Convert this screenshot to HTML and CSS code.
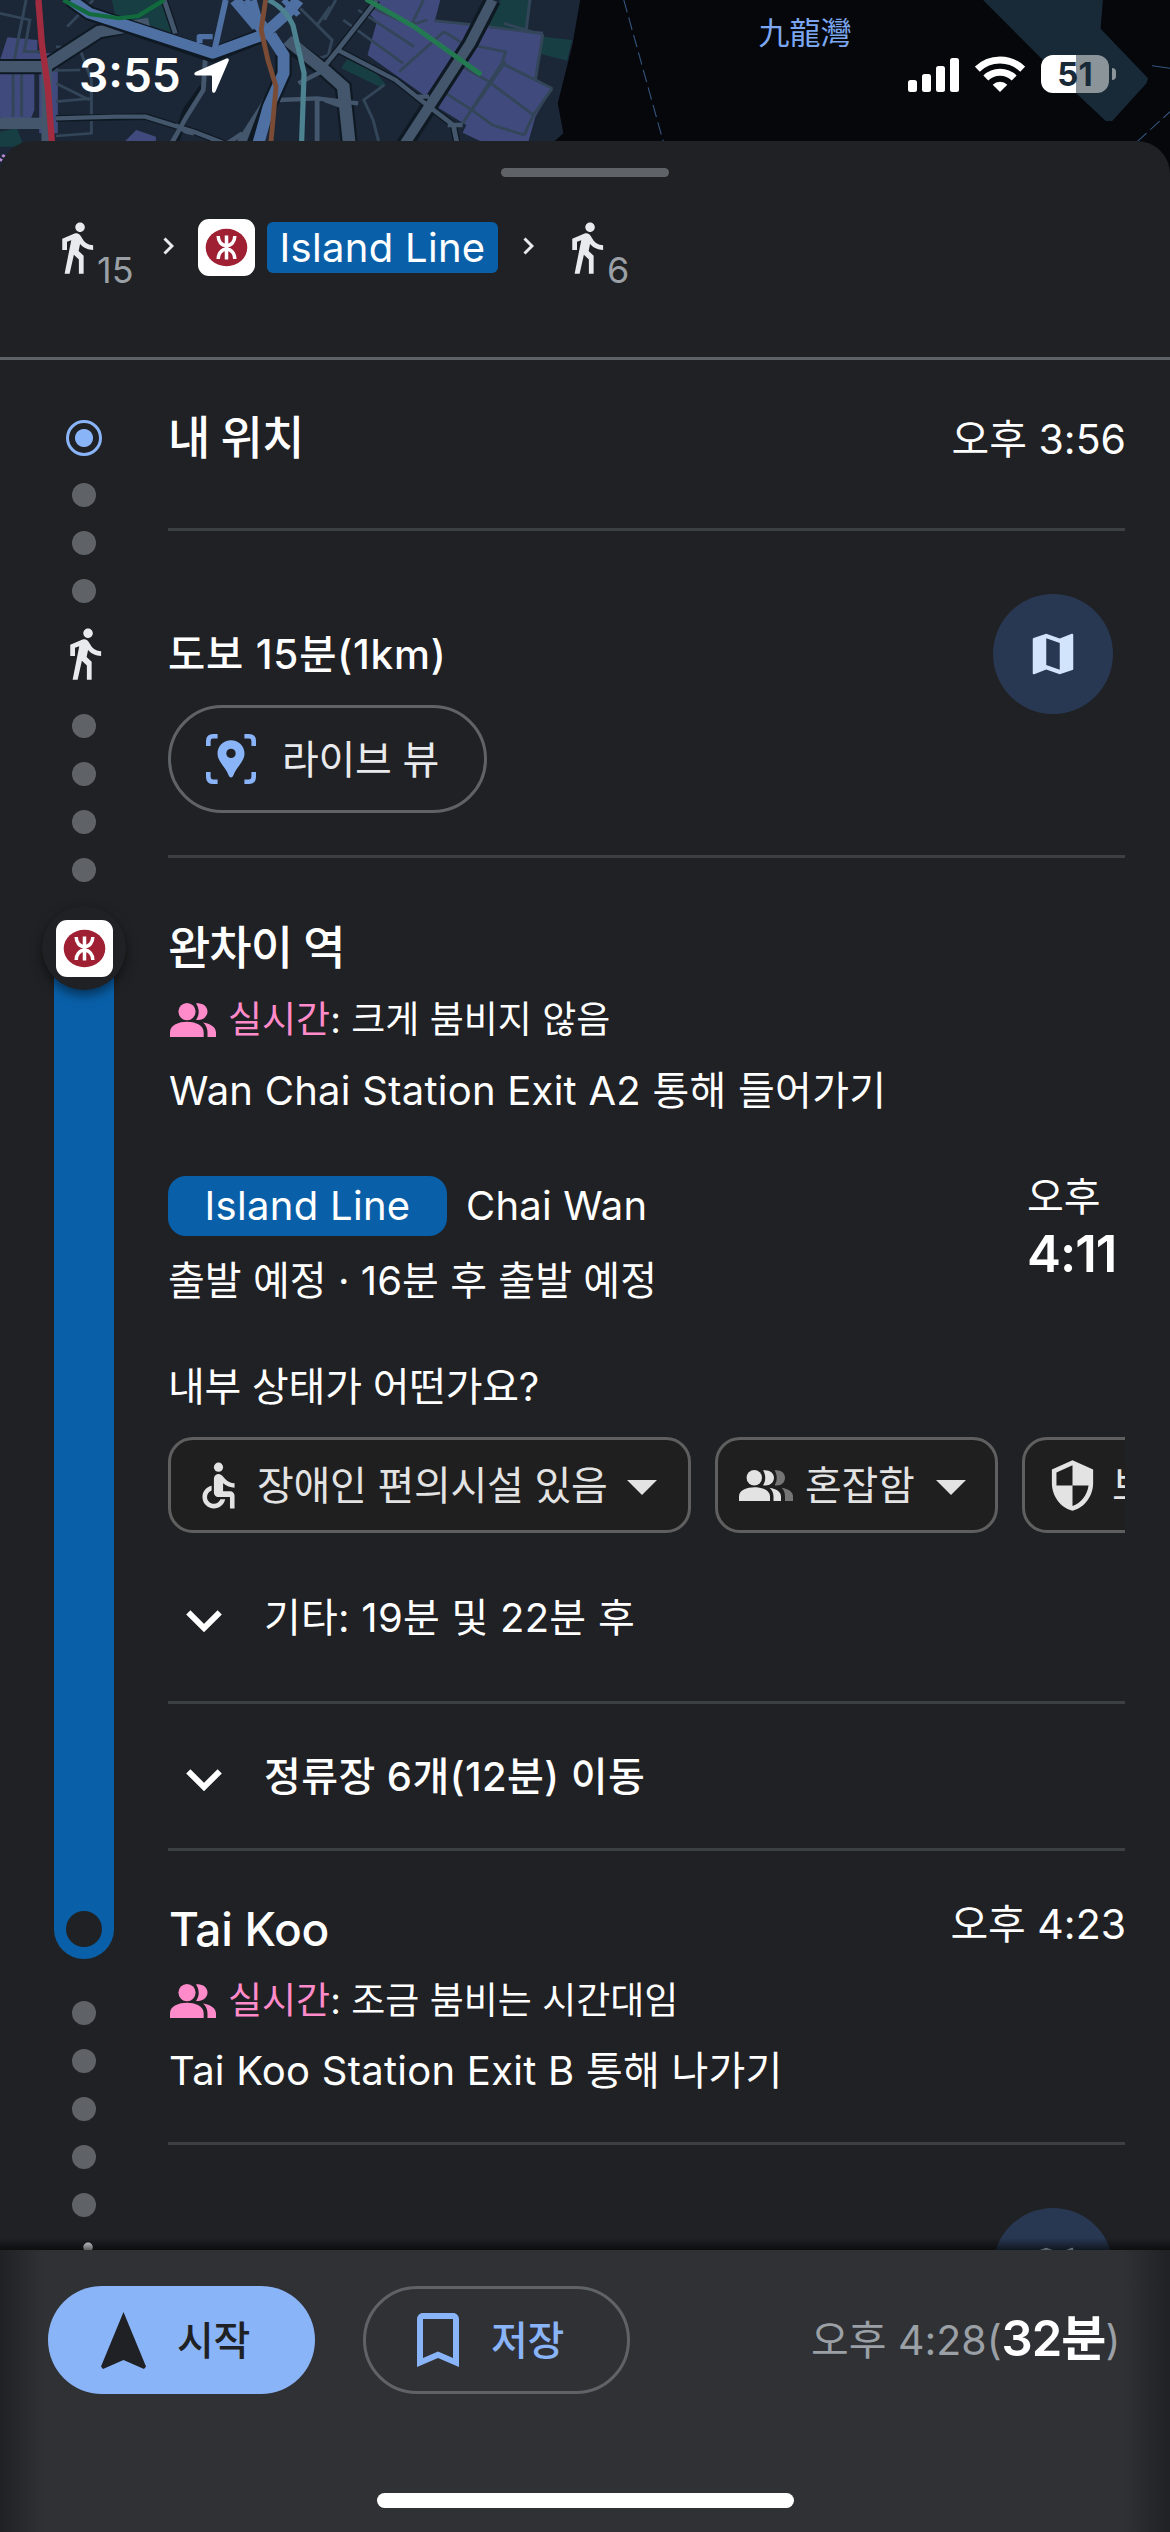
FILE: index.html
```html
<!DOCTYPE html>
<html lang="ko">
<head>
<meta charset="utf-8">
<title>경로 안내</title>
<link rel="stylesheet" href="styles.css">
</head>
<body>
<svg class="defs" width="0" height="0">
  <symbol id="walk" viewBox="0 0 24 24"><path d="M13.5 5.5c1.1 0 2-.9 2-2s-.9-2-2-2-2 .9-2 2 .9 2 2 2zM9.8 8.9L7 23h2.1l1.8-8 2.1 2v6h2v-7.5l-2.1-2 .6-3C14.8 12 16.8 13 19 13v-2c-1.9 0-3.5-1-4.3-2.4l-1-1.6c-.4-.6-1-1-1.7-1-.3 0-.5.1-.8.1L6 8.3V13h2V9.6l1.8-.7z"/></symbol>
  <symbol id="mtr" viewBox="-28.5 -28.5 57 57"><rect x="-28.5" y="-28.5" width="57" height="57" rx="11" fill="#fff"/><ellipse rx="20.8" ry="18.8" fill="#9f2033"/><g fill="none" stroke="#fff" stroke-width="3.5"><path d="M0-12V12"/><path d="M-8.3-11.5C-8.3-6-5-1.8 0-1.8S8.300-6 8.300-11.500"/><path d="M-8.3 11.5C-8.3 6-5 1.8 0 1.8S8.3 6 8.3 11.5"/></g></symbol>
  <symbol id="map" viewBox="0 0 24 24"><path d="M20.5 3l-.16.03L15 5.1 9 3 3.36 4.9c-.21.07-.36.25-.36.48V20.5c0 .28.22.5.5.5l.16-.03L9 18.9l6 2.1 5.64-1.9c.21-.07.36-.25.36-.48V3.5c0-.28-.22-.5-.5-.5zM15 19l-6-2.11V5l6 2.11V19z"/></symbol>
  <symbol id="people" viewBox="0 0 46 34"><ellipse cx="17" cy="8.6" rx="8.6" ry="8.6"/><path d="M0 34V29.5C0 22 9 18.8 17 18.8S33.7 22 33.7 29.5V34zM26 .4C29.6 5.5 29.6 12 26 16.8C32 18 37.5 14 37.5 8.6S32-.6 26 .4zM33 19.4C40.5 20.6 46 24 46 29.5V34H37.5V29.5C37.5 25.5 36 22 33 19.4z"/></symbol>
</svg>

<div class="map">
  <svg class="map-art" viewBox="0 0 1170 176">
    <rect width="1170" height="176" fill="#05070b"/>
    <g transform="scale(.3731 .3333)">
      <path fill="#1b2737" d="M0 0H1555L1535 130 1495 310 1510 400 1480 430V530H0z"/>
      <g fill="#414a7c"><path d="M20 112L100 120V160H155V400H105V215H92V330L75 378H35L0 352V215L0 180z"/><path d="M1010 0H1180L1165 65 1280 75 1315 85 1455 95 1435 235 1480 265 1435 350 1415 430H1300L1240 398 1250 375 1170 320 1195 275 1140 288 985 165 1010 65 985 35z"/><path d="M365 390L418 410V430H330z"/></g>
      <g fill="#173f43"><path d="M300 0H440L465 100 360 60 310 50z"/><path d="M1340 0H1425L1410 95 1310 80z"/><path d="M1455 110L1533 120 1520 182 1450 162z"/><path d="M930 178L1005 215 1035 255 1020 262 915 205z"/><path d="M0 395L45 384 58 420V440H0z"/></g>
      <g fill="none" stroke="#334558" stroke-width="8"><path d="M0 40L80 60 65 155H110M70 0L50 110 35 200V350M58 215V350M0 215L215 210M180 80L250 0M150 140L215 150 245 240V400L150 408M150 305L245 295M150 250L240 300M805 25L850 75 890 120 880 165 820 190M850 75L885 20M900 0L870 60M920 60L1080 190M960 30L1110 140M990 20L1100 75 1145 60M1350 70L1440 100M1135 0L1100 80M1165 62L1310 80 1455 102M1190 95L1240 130 1355 155 1345 190 1480 265M1190 95L1070 215M1240 200L1310 245 1430 345M1195 280L1265 330 1320 375 1405 405M1355 185L1265 330M1455 102L1435 240M1345 190L1240 370M1030 255L975 300 1000 360 1015 425M1420 0L1410 95M1480 265L1430 345 1405 405"/></g>
      <g fill="none" stroke="#0f1923" stroke-width="46"><path d="M0 200H120L265 95 330 80"/><path d="M1320 0L1260 130 1150 320 1080 440"/><path d="M770 130L870 210 920 260 937 440"/></g>
      <g fill="none" stroke="#0f1923" stroke-width="20"><path d="M1010 0L905 150 865 205M905 150L1060 240 1150 320 1215 375 1225 430M150 355L390 350 520 395 600 430M470 425L500 330 545 260M440 0L470 100"/></g>
      <g fill="none" stroke="#43566b" stroke-width="34"><path d="M0 200H120L265 95 400 70M0 370H120M770 120L870 210 920 260 937 440M650 430L730 290"/><path d="M1320 0L1260 130 1150 320 1080 440M125 180V430" stroke-width="28"/></g>
      <g fill="none" stroke="#43566b" stroke-width="13"><path d="M1010 0L905 150 865 205M905 150L1060 240 1150 320 1215 375 1225 430M1150 290H1120M1200 375H1240M150 355L310 350 390 350 520 395 600 430M460 430L500 350 545 270 550 180M470 375L500 395 520 400M750 300L850 295 960 310M850 300V430M870 300L920 320M440 0L470 100M800 250L870 210M610 430L650 400"/></g>
      <path fill="none" stroke="#0f1923" stroke-width="44" d="M190 0L240 40 570 165 705 105M760 165V220L720 320 680 440"/>
      <g fill="none" stroke="#4e70a2" stroke-linejoin="round"><path stroke-width="32" d="M190 0L240 40 570 160 705 105 770 40 800 0M630 0L690 80M725 105L760 165V220L720 320 690 440"/><path stroke-width="16" d="M605 0L575 150M570 110H535V130M630 0L705 105M660 0L720 90M760 0L800 45M680 0L700 80"/></g>
      <path fill="none" stroke="#116b3c" stroke-width="12" d="M170 0L240 42 320 55 370 48 440 0"/>
      <path fill="none" stroke="#237a52" stroke-width="14" stroke-linecap="round" d="M985 0L1110 80 1285 220"/>
      <path fill="none" stroke="#a12c40" stroke-width="17" d="M103 0L112 130 128 260 140 440"/>
      <path fill="none" stroke="#7a4c35" stroke-width="13" d="M712 0L700 90 718 180 740 260 725 440"/>
      <path fill="none" stroke="#4d8290" stroke-width="14" d="M720 0Q765 25 785 75L815 220 808 440"/>
      <path fill="none" stroke="#b98ad8" stroke-width="8" stroke-dasharray="8 6" d="M0 483L14 460"/>
    </g>
    <g transform="translate(585 0) scale(.3731 .3333)">
      <path fill="#182a38" d="M1067 0H1388L1382 86 1509 235 1505 250 1413 363H1396L1312 275z"/>
      <g fill="none" stroke="#34557f" stroke-width="3"><path stroke-dasharray="38 16" d="M104 0L211 430"/><path stroke-dasharray="36 14" d="M1480 425L1568 335"/><path d="M1520 197L1568 205"/></g>
    </g>
  </svg>
  <div class="place"><span>카우룽만</span><strong>九龍灣</strong></div>
  <div class="status">
    <span class="clock">3:55</span>
    <svg class="loc" viewBox="0 0 35 35"><path d="M32.5.4Q35.2 0 34.8 2.6L21.5 33.5Q20.5 35.5 18.8 34.5 18 34 18 32V18.5Q18 17.5 17 17.5H3Q.8 17.5.3 16.2 0 14.8 2 13.7z"/></svg>
    <svg class="signal" viewBox="0 0 52 34"><rect y="22" width="9" height="12" rx="2.5"/><rect x="14" y="16" width="9" height="18" rx="2.5"/><rect x="28" y="8" width="9" height="26" rx="2.5"/><rect x="42" width="9" height="34" rx="2.5"/></svg>
    <svg class="wifi" viewBox="0 0 50 36"><g fill="none" stroke="#fff" stroke-width="7"><path d="M2.3 13.2A32.5 32.5 0 0 1 47.7 13.2"/><path d="M10.8 22A20.5 20.5 0 0 1 39.2 22"/></g><path fill="#fff" d="M25 36L17.7 28.8A10.5 10.5 0 0 1 32.3 28.8z"/></svg>
    <div class="battery"><span>51</span></div>
  </div>
</div>

<main class="sheet">
  <header class="summary">
    <div class="handle"></div>
    <div class="modes">
      <svg class="walk"><use href="#walk"/></svg><span class="mins">15</span>
      <svg class="sep first" viewBox="0 0 11 18"><path d="M1.5 1.5L9 9 1.5 16.5"/></svg>
      <svg class="mtr"><use href="#mtr"/></svg>
      <span class="tag">Island Line</span>
      <svg class="sep second" viewBox="0 0 11 18"><path d="M1.5 1.5L9 9 1.5 16.5"/></svg>
      <svg class="walk"><use href="#walk"/></svg><span class="mins">6</span>
    </div>
  </header>

  <div class="route">
    <div class="rail">
      <div class="origin"></div>
      <div class="dots"><i></i><i></i><i></i></div>
      <svg class="walk"><use href="#walk"/></svg>
      <div class="dots second"><i></i><i></i><i></i><i></i></div>
      <div class="ride"><div class="bullet"><svg class="mtr"><use href="#mtr"/></svg></div><div class="stop"></div></div>
      <div class="dots third"><i></i><i></i><i></i><i></i><i></i></div>
      <svg class="walk"><use href="#walk"/></svg>
    </div>

    <div class="steps">
      <section class="step start">
        <h2>내 위치</h2>
        <time>오후 3:56</time>
      </section>

      <section class="step foot">
        <div>
          <h3>도보 15분(1km)</h3>
          <button class="live"><svg viewBox="0 0 50 50"><g fill="none" stroke="#8ab4f8" stroke-width="4.6"><path d="M2.3 12V7Q2.3 2.3 7 2.3H11.6M38.4 2.3H43Q47.7 2.3 47.7 7V12M47.7 38V43Q47.7 47.7 43 47.7H38.4M11.6 47.7H7Q2.3 47.7 2.3 43V38"/></g><path fill="#8ab4f8" fill-rule="evenodd" d="M25 6.2C17.5 6.2 11.5 12 11.5 19.5 11.5 28 20 33 22.8 41.8Q23.5 43.6 25 43.6T27.2 41.8C30 33 38.5 28 38.5 19.5 38.5 12 32.5 6.2 25 6.2zM25 14.7a4.7 4.7 0 1 1 0 9.4 4.7 4.7 0 0 1 0-9.4z"/></svg><span>라이브 뷰</span></button>
        </div>
        <button class="fab"><svg><use href="#map"/></svg></button>
      </section>

      <section class="step board">
        <h2>완차이 역</h2>
        <p class="crowd"><svg><use href="#people"/></svg><span><b>실시간</b>: 크게 붐비지 않음</span></p>
        <p class="exit">Wan Chai Station Exit A2 통해 들어가기</p>
        <div class="depart">
          <div>
            <div class="line"><span class="pill">Island Line</span><span class="dest">Chai Wan</span></div>
            <p class="when">출발 예정 · 16분 후 출발 예정</p>
          </div>
          <div class="at"><span>오후</span><strong>4:11</strong></div>
        </div>
        <p class="ask">내부 상태가 어떤가요?</p>
        <div class="chips">
          <button class="chip c1"><svg class="acc" viewBox="0 0 24 24"><circle cx="12" cy="4" r="2"/><path d="M19 13v-2c-1.54.02-3.09-.75-4.07-1.83l-1.29-1.43c-.17-.19-.38-.34-.61-.45-.01 0-.01-.01-.02-.01H13c-.35-.2-.75-.3-1.19-.26C10.76 7.11 10 8.04 10 9.09V15c0 1.1.9 2 2 2h5v5h2v-5.5c0-1.1-.9-2-2-2h-3v-3.45c1.29 1.07 3.25 1.94 5 1.95zm-6.17 5c-.41 1.16-1.52 2-2.83 2-1.66 0-3-1.34-3-3 0-1.31.84-2.41 2-2.83V12.1c-2.28.46-4 2.48-4 4.9 0 2.76 2.24 5 5 5 2.42 0 4.44-1.72 4.9-4h-2.07z"/></svg><span>장애인 편의시설 있음</span><i></i></button>
          <button class="chip c2"><svg class="busy" viewBox="0 0 54 31"><circle cx="15.3" cy="7.7" r="7.7"/><path d="M0 31V26.5C0 20 8 17.2 15.5 17.2S31 20 31 26.5V31zM24 .3C27 5 27 11 24 15.2 30 16.5 35 12.8 35 7.7S30-.6 24 .3zM30.5 17.8C37.5 19 42 22 42 26.5V31H34.5V26.5C34.5 23 33 20 30.5 17.8z"/><path fill="#757575" d="M35.5.3C38.5 5 38.5 11 35.5 15.2 41.5 16.5 46 12.8 46 7.7S41.5-.6 35.5.3zM42.5 17.8C49.5 19 54 22 54 26.5V31H46V26.5C46 23 45 20 42.5 17.8z"/></svg><span>혼잡함</span><i></i></button>
          <button class="chip c3"><svg class="sec" viewBox="0 0 24 24"><path d="M12 1L3 5v6c0 5.55 3.84 10.74 9 12 5.16-1.26 9-6.45 9-12V5l-9-4zm0 10.99h7c-.53 4.12-3.28 7.79-7 8.94V12H5V6.3l7-3.11v8.8z"/></svg><span>보안</span></button>
        </div>
        <div class="more"><svg viewBox="0 0 36 22"><path d="M2.3 2.3L18 18 33.7 2.3"/></svg><span>기타: 19분 및 22분 후</span></div>
      </section>

      <section class="step stops">
        <div class="more strong"><svg viewBox="0 0 36 22"><path d="M2.3 2.3L18 18 33.7 2.3"/></svg><span>정류장 6개(12분) 이동</span></div>
      </section>

      <section class="step alight">
        <div>
          <h2 class="latin">Tai Koo</h2>
          <p class="crowd"><svg><use href="#people"/></svg><span><b>실시간</b>: 조금 붐비는 시간대임</span></p>
          <p class="exit">Tai Koo Station Exit B 통해 나가기</p>
        </div>
        <time>오후 4:23</time>
      </section>

      <section class="step last"><button class="fab"><svg><use href="#map"/></svg></button></section>
    </div>
  </div>
</main>

<footer class="bar">
  <div class="actions">
    <button class="go"><svg viewBox="0 0 45 57"><path d="M22.5 0L45 54.5 43 57 22.5 48 2 57 0 54.5z"/></svg><span>시작</span></button>
    <button class="save"><svg viewBox="5 3 14 18"><path d="M17 3H7c-1.1 0-1.99.9-1.99 2L5 21l7-3 7 3V5c0-1.1-.9-2-2-2zm0 15l-5-2.18L7 18V5h10v13z"/></svg><span>저장</span></button>
    <div class="eta"><span>오후 4:28(</span><strong>32분</strong><span>)</span></div>
  </div>
  <div class="home"></div>
</footer>
</body>
</html>
```
FILE: styles.css
```css
* { box-sizing: border-box; margin: 0; padding: 0; }
body { width: 1170px; height: 2532px; overflow: hidden; background: #202124; color: #fff; font-family: Inter, "Noto Sans CJK KR", sans-serif; font-size: 40px; font-weight: 400; }
button { background: none; border: 0; font: inherit; color: inherit; }
svg { display: block; flex: none; }
i { font-style: normal; }
.defs { position: absolute; }

.map { position: relative; height: 176px; overflow: hidden; }
.map-art { width: 1170px; height: 176px; }
.place { position: absolute; left: 749px; top: -31px; width: 112px; text-align: center; color: #7ca7f0; font-size: 27px; }
.place span { display: block; line-height: 36px; height: 44px; white-space: nowrap; }
.place strong { display: block; font: 400 31px/36px "Noto Sans CJK TC", sans-serif; }
.status { position: absolute; inset: 0 0 auto; height: 150px; display: flex; align-items: center; padding: 0 55px 0 79px; }
.clock { font-size: 46px; font-weight: 600; line-height: 60px; }
.loc { width: 35px; height: 35px; margin-left: 13px; fill: #fff; }
.signal { width: 52px; height: 34px; margin-left: auto; fill: #fff; }
.wifi { width: 50px; height: 36px; margin: -2px 0 0 15px; }
.battery { position: relative; width: 68px; height: 38px; margin: -2px 6px 0 16px; border-radius: 12px; background: linear-gradient(90deg, #fff 35px, #8b9499 35px); color: #182a38; font-size: 33px; font-weight: 700; line-height: 38px; text-align: center; }
.battery::after { content: ""; position: absolute; left: 71px; top: 13px; width: 4px; height: 12px; border-radius: 0 4px 4px 0; background: #8b9499; }

.sheet { position: relative; height: 2109px; margin-top: -35px; overflow: hidden; border-radius: 33px 33px 0 0; background: #202124; }
.summary { height: 219px; padding-top: 27px; border-bottom: 3px solid #5f6368; }
.handle { width: 168px; height: 9px; margin: 0 auto; border-radius: 5px; background: #5f6368; }
.modes { display: flex; align-items: flex-start; padding: 42px 0 0 48px; }
.walk { width: 57px; height: 57px; fill: #e8eaed; }
.mins { width: 44px; margin: 29px 0 0 -8px; color: #9aa0a6; font-size: 36px; line-height: 45px; }
.sep { width: 11px; height: 18px; margin-top: 18px; fill: none; stroke: #e8eaed; stroke-width: 3; }
.sep.first { margin-left: 22px; }
.sep.second { margin: 18px 24px 0 25px; }
.mtr { width: 57px; height: 57px; }
.modes .mtr { margin-left: 24px; }
.tag { width: 231px; height: 51px; margin: 3px 0 0 12px; border-radius: 6px; background: #0960a9; line-height: 51px; letter-spacing: .3px; text-align: center; white-space: nowrap; }

.route { display: flex; }
.rail { display: flex; flex: none; flex-direction: column; align-items: center; width: 168px; padding-top: 60px; }
.origin { width: 36px; height: 36px; border: 3px solid #8ab4f8; border-radius: 50%; background: radial-gradient(circle, #8ab4f8 8.5px, transparent 9.5px); }
.dots { display: flex; flex-direction: column; gap: 24px; margin: 27px 0 22px; }
.dots i { width: 24px; height: 24px; border-radius: 50%; background: #5f6368; }
.dots.second { margin: 32px 0 66px; }
.dots.third { margin: 42px 0 22px; }
.ride { display: flex; flex: none; flex-direction: column; align-items: center; justify-content: space-between; width: 60px; height: 1011px; border-radius: 0 0 30px 30px; background: #0960a9; }
.bullet { display: flex; flex: none; align-items: center; justify-content: center; width: 84px; height: 84px; margin: -42px -12px 0; border-radius: 50%; background: #202124; box-shadow: 0 5px 12px rgba(0, 0, 0, .5); }
.stop { width: 36px; height: 36px; margin-bottom: 12px; border-radius: 50%; background: #202124; }

.steps { width: 957px; }
.step { border-bottom: 3px solid #3c4043; white-space: nowrap; }
h2 { font-size: 46px; font-weight: 500; line-height: 56px; letter-spacing: -1px; }
h2.latin { padding-left: 1px; letter-spacing: -.3px; }
h3 { font-size: 40.5px; font-weight: 500; line-height: 56px; letter-spacing: .8px; }
time { margin-right: -1px; font-size: 41px; line-height: 56px; }
.start { display: flex; justify-content: space-between; height: 171px; padding-top: 49px; }
.start time { margin-top: 2px; }
.foot { display: flex; justify-content: space-between; height: 327px; padding: 96px 12px 0 0; }
.live { display: flex; align-items: center; width: 319px; height: 108px; margin-top: 22px; padding-left: 35px; border: 3px solid #5f6368; border-radius: 54px; color: #e8eaed; letter-spacing: -.3px; }
.live svg { width: 50px; height: 50px; margin-right: 26px; }
.live span { margin-top: -4px; }
.fab { display: flex; align-items: center; justify-content: center; width: 120px; height: 120px; border-radius: 50%; background: #283852; }
.fab svg { width: 54px; height: 54px; fill: #d2e3fc; }
.foot .fab { margin-top: -33px; }

.board { height: 846px; padding-top: 61px; }
.crowd { display: flex; align-items: center; margin-top: 20px; padding-left: 2px; font-size: 37px; line-height: 50px; }
.crowd svg { width: 46px; height: 34px; margin-right: 12px; fill: #ff8bcb; }
.crowd b { color: #ff8bcb; font-weight: 400; }
.exit { margin-top: 21px; padding-left: 1px; line-height: 50px; letter-spacing: .25px; }
.depart { display: flex; justify-content: space-between; margin-top: 60px; }
.line { display: flex; align-items: center; height: 60px; }
.pill { width: 279px; height: 60px; border-radius: 18px; background: #0960a9; line-height: 60px; letter-spacing: .3px; text-align: center; }
.dest { margin-left: 19px; line-height: 62px; letter-spacing: .2px; }
.when { margin-top: 20px; line-height: 50px; letter-spacing: .05px; }
.at { display: flex; flex-direction: column; width: 99px; margin-top: -1px; padding-left: 1px; line-height: 44px; }
.at strong { margin-top: 5px; font-size: 51px; font-weight: 600; line-height: 60px; letter-spacing: -1px; }
.ask { margin-top: 56px; line-height: 50px; letter-spacing: -.26px; }
.chips { display: flex; gap: 24px; margin-top: 25px; overflow: hidden; }
.chip { display: flex; flex: none; align-items: center; height: 96px; border: 3px solid #5f5f5f; border-radius: 25px; background: #1f1f1f; color: #e3e3e3; fill: #e3e3e3; letter-spacing: -.3px; }
.chip span { margin-top: -4px; }
.c1 { width: 523px; padding-left: 20px; }
.c2 { width: 283px; padding-left: 21px; }
.c3 { width: 283px; padding-left: 20px; }
.chip i { border: solid transparent; border-width: 15px 15px 0; border-top-color: #e3e3e3; }
.c1 i { margin: 4px 0 0 20px; }
.c2 i { margin: 4px 0 0 21px; }
.acc { width: 55px; height: 55px; margin-right: 11px; }
.busy { width: 54px; height: 31px; margin-right: 12px; }
.sec { width: 55px; height: 55px; margin-right: 12px; }
.more { display: flex; padding: 60px 0 0 18px; line-height: 50px; letter-spacing: .25px; }
.more svg { width: 36px; height: 22px; margin: 17px 42px 0 0; fill: none; stroke: #fff; stroke-width: 6; }
.more.strong { padding-top: 48px; font-weight: 500; letter-spacing: .45px; }
.stops { height: 147px; }
.alight { display: flex; justify-content: space-between; height: 294px; padding-top: 50px; }
.alight time { margin-top: -5px; }
.alight .crowd { margin-top: 19px; }
.alight .exit { margin-top: 20px; }
.last { display: flex; justify-content: flex-end; padding: 63px 12px 0 0; border: 0; }

.bar { position: relative; height: 282px; padding-top: 36px; background: linear-gradient(90deg, #202124, #303134 43px, #303134 1124px, #202124); }
.bar::before { content: ""; position: absolute; left: 0; right: 0; top: -12px; height: 12px; background: linear-gradient(transparent, rgba(0, 0, 0, .6)); }
.actions { display: flex; align-items: center; padding-left: 48px; }
.go, .save { display: flex; align-items: center; width: 267px; height: 108px; border-radius: 54px; font-weight: 500; letter-spacing: -.4px; }
.go span, .save span { margin-top: -4px; }
.go { margin-right: 48px; padding-left: 53px; background: #8ab4f8; color: #202124; fill: #202124; }
.go svg { width: 45px; height: 57px; margin-right: 31px; }
.save { padding-left: 51px; border: 3px solid #5f6368; color: #8ab4f8; fill: #8ab4f8; }
.save svg { width: 42px; height: 54px; margin-right: 32px; }
.eta { display: flex; align-items: center; margin-left: 181px; color: #9aa0a6; font-size: 41px; line-height: 60px; white-space: nowrap; }
.eta strong { margin-top: -2px; color: #fff; font-size: 49px; font-weight: 600; letter-spacing: -1px; }
.home { width: 417px; height: 15px; margin: 99px auto 0; border-radius: 8px; background: #fff; }
```
